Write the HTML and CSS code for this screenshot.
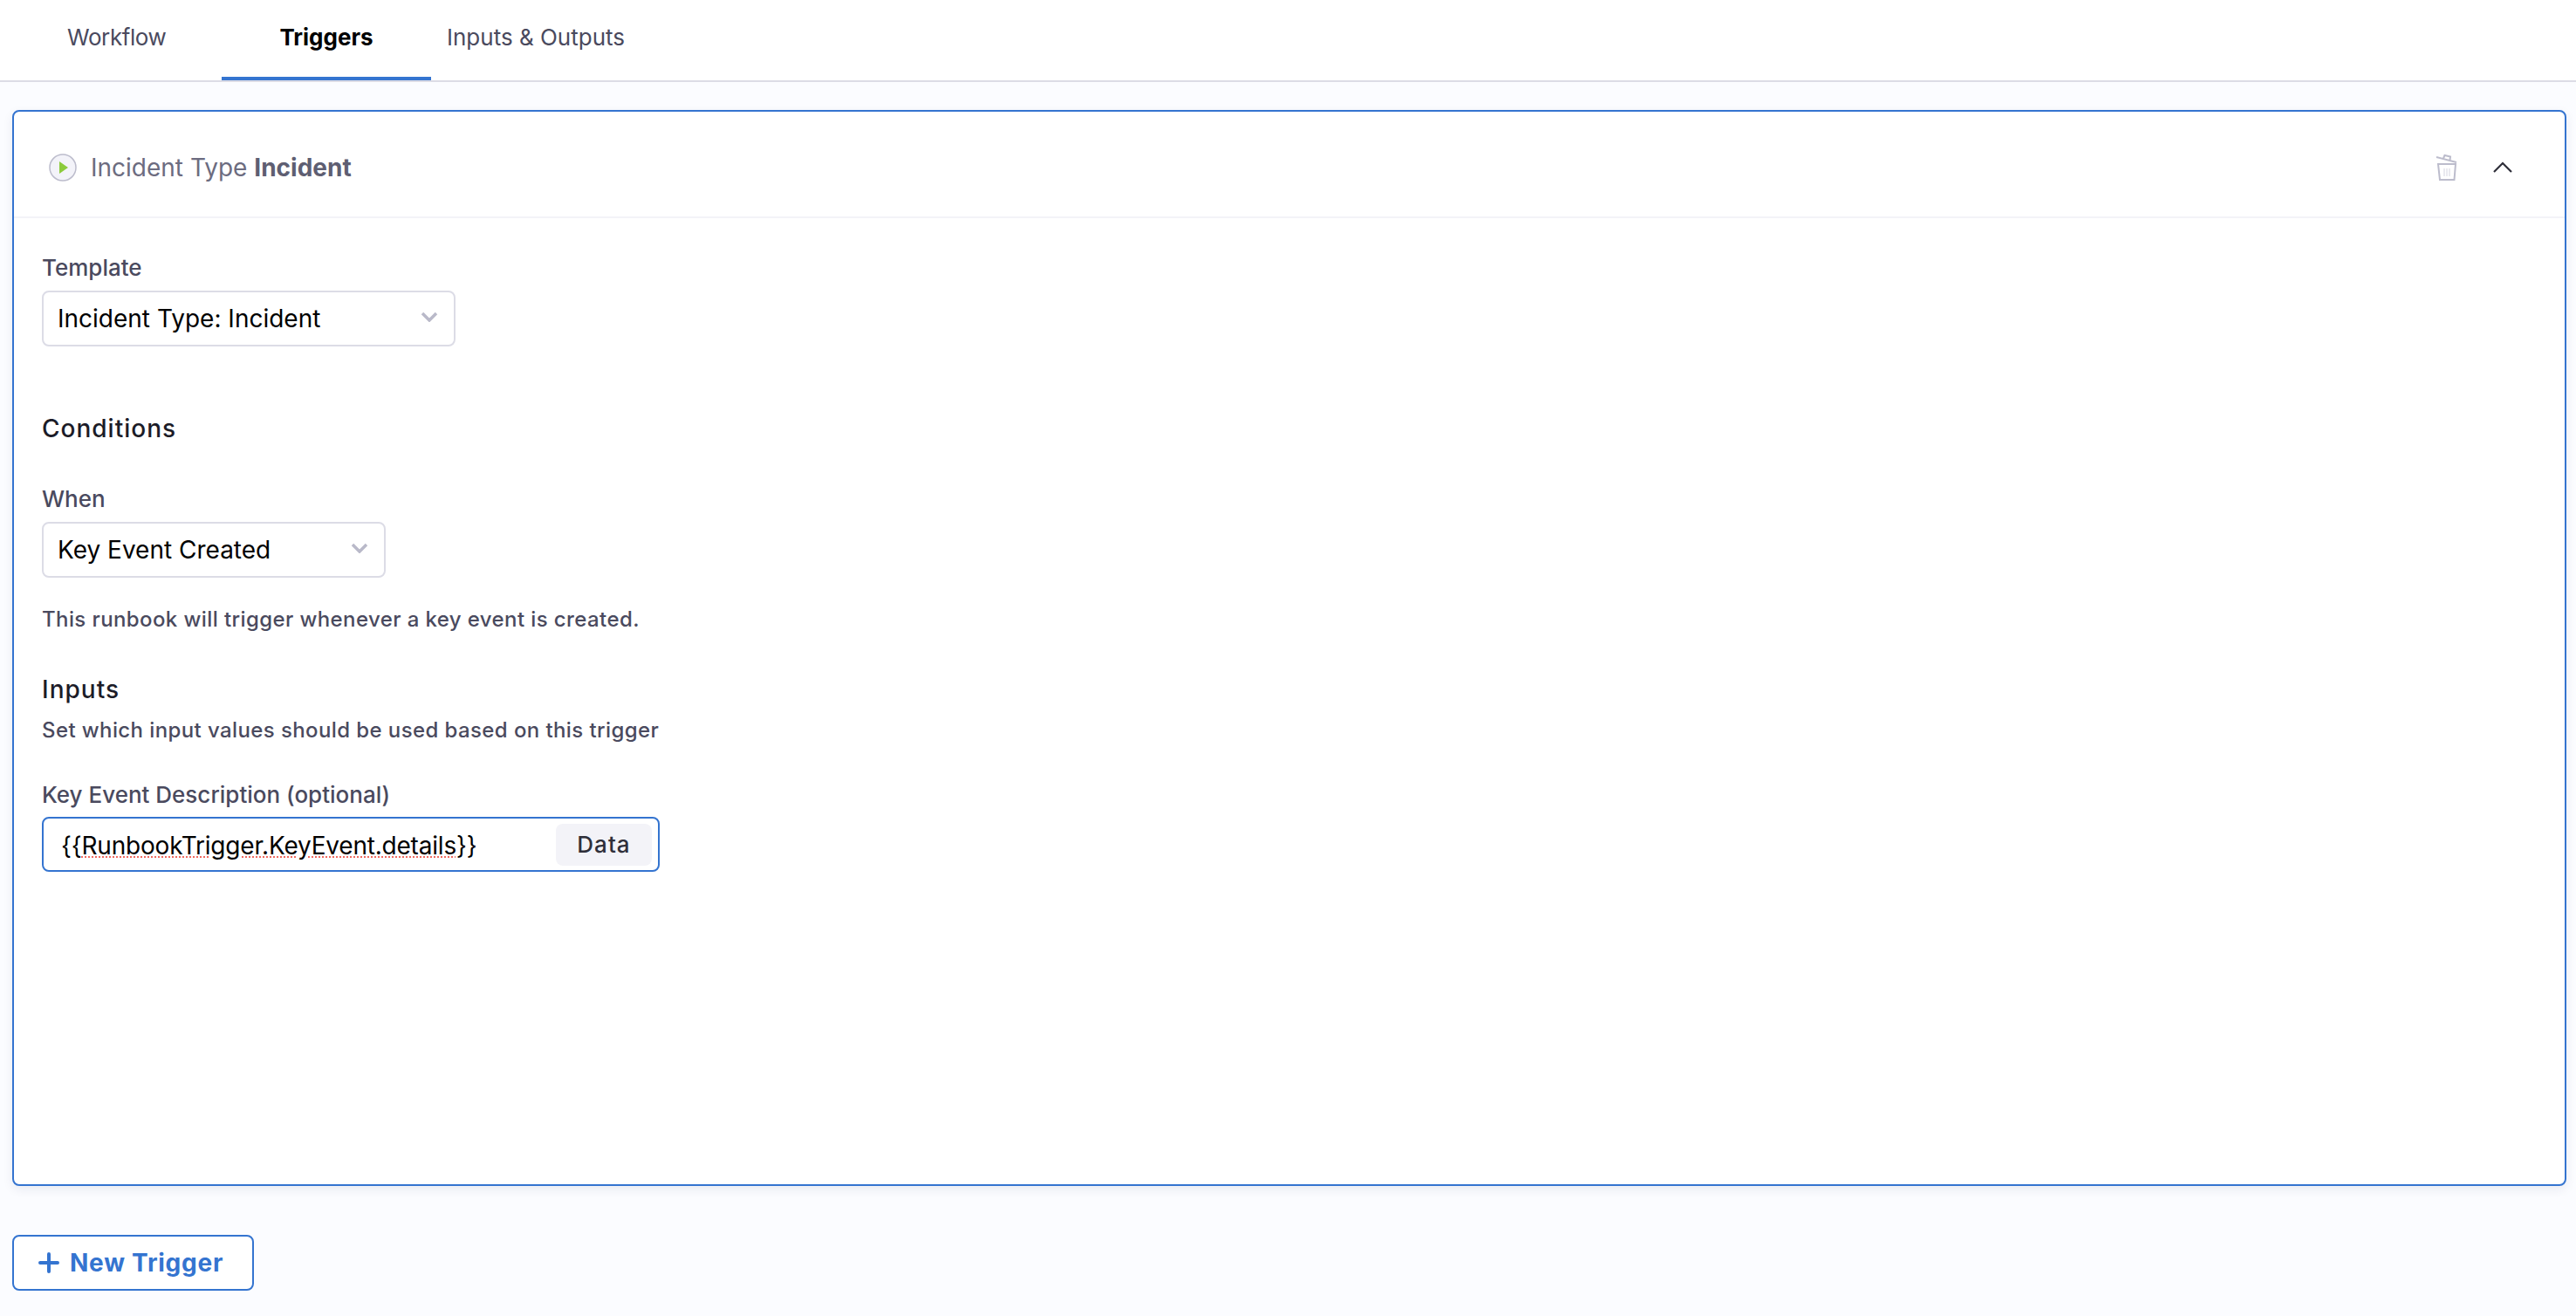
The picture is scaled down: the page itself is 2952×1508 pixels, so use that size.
FILE: index.html
```html
<!DOCTYPE html>
<html lang="en">
<head>
  <meta charset="utf-8">
  <link rel="stylesheet" href="styles.css">
  <title>Triggers</title>
</head>
<body>
  <nav class="tabs">
    <a class="tab tab-workflow">Workflow</a>
    <a class="tab tab-triggers active">Triggers</a>
    <a class="tab tab-io">Inputs &amp; Outputs</a>
  </nav>

  <main class="content">
    <section class="card">
      <header class="card-head">
        <span class="play">
          <svg viewBox="0 0 32 32" width="32" height="32">
            <circle cx="16" cy="16" r="15" fill="#f3f3f9" stroke="#bcbccc" stroke-width="1.5"/>
            <path d="M12 9 L22 16 L12 23 Z" fill="#8ccb3c"/>
          </svg>
        </span>
        <span class="card-title">Incident Type <b>Incident</b></span>
        <span class="card-actions">
          <svg class="trash" viewBox="0 0 26 32" width="26" height="32" fill="none" stroke="#bcbccc" stroke-width="2">
            <path d="M1 4 L24 10"/>
            <path d="M9 5.5 L10.5 2 L17 3.5 L16.5 7.5"/>
            <path d="M3 12 H23 L21.5 30 H5 Z"/>
            <path d="M10 17 V26 M13 17 V26 M16 17 V26" stroke-width="1" stroke="#d4d4e0"/>
          </svg>
          <svg class="chevron-up" viewBox="0 0 22 14" width="22" height="14" fill="none" stroke="#2f2f3a" stroke-width="2.2">
            <path d="M1 12 L11 2 L21 12"/>
          </svg>
        </span>
      </header>

      <div class="card-body">
        <label class="field-label">Template</label>
        <div class="select select-template">
          <span>Incident Type: Incident</span>
          <svg class="chevron" viewBox="0 0 20 12" width="20" height="12" fill="none" stroke="#b9b9c9" stroke-width="3.5"><path d="M2 2 L10 10 L18 2"/></svg>
        </div>

        <h3 class="section-title conditions">Conditions</h3>

        <label class="field-label">When</label>
        <div class="select select-when">
          <span>Key Event Created</span>
          <svg class="chevron" viewBox="0 0 20 12" width="20" height="12" fill="none" stroke="#b9b9c9" stroke-width="3.5"><path d="M2 2 L10 10 L18 2"/></svg>
        </div>
        <p class="help help-when">This runbook will trigger whenever a key event is created.</p>

        <h3 class="section-title inputs">Inputs</h3>
        <p class="help help-inputs">Set which input values should be used based on this trigger</p>

        <label class="field-label label-desc">Key Event Description (optional)</label>
        <div class="data-input">
          <span class="data-value">{{<span class="misspelt">RunbookTrigger.KeyEvent.details</span>}}</span>
          <span class="data-btn">Data</span>
        </div>
      </div>
    </section>

    <button class="new-trigger">
      <svg viewBox="0 0 24 24" width="24" height="24" stroke="#3474d0" stroke-width="4" stroke-linecap="round"><path d="M12 2 V22 M2 12 H22"/></svg>
      New Trigger
    </button>
  </main>
</body>
</html>
```

FILE: styles.css
```css
* {
  box-sizing: border-box;
}

html, body {
  margin: 0;
  height: 100%;
}

body {
  font-family: Inter, "Noto Sans", sans-serif;
  font-size: 28px;
  background: #fbfcff;
  color: #000;
  overflow: hidden;
}

.tabs {
  display: flex;
  height: 94px;
  background: #fff;
  border-bottom: 2px solid #dcdce6;
}

.tab {
  height: 92px;
  line-height: 86px;
  color: #4a4a5e;
  font-size: 26px;
  text-align: center;
}
.tab-workflow { width: 254px; padding-left: 77px; text-align: left; letter-spacing: -0.4px; }
.tab-triggers { width: 240px; }
.tab-io { margin-left: 18px; }
.tab.active {
  color: #000;
  font-weight: 700;
  border-bottom: 4px solid #3474d0;
  border-radius: 4px 4px 0 0;
}

.content {
  padding: 32px 11px 0 14px;
}

.card {
  height: 1233px;
  background: #fff;
  border: 2px solid #3474d0;
  border-radius: 8px;
  box-shadow: 0 4px 12px rgba(30, 40, 90, 0.08);
}

.card-head {
  display: flex;
  align-items: center;
  height: 122px;
  padding: 8px 60px 0 40px;
  border-bottom: 2px solid #f3f3f8;
}

.play {
  display: flex;
  margin-right: 16px;
}

.card-title {
  color: #6c6c80;
  font-weight: 400;
}
.card-title b {
  color: #5e5e72;
  font-weight: 700;
}

.card-actions {
  display: flex;
  align-items: center;
  gap: 40px;
  margin-left: auto;
}

.card-body {
  padding: 40px 32px;
}

.field-label {
  display: block;
  height: 34px;
  line-height: 34px;
  font-size: 26px;
  color: #4a4a5e;
  font-weight: 500;
}

.select {
  display: flex;
  align-items: center;
  justify-content: space-between;
  height: 64px;
  margin-top: 9px;
  padding: 0 18px 0 16px;
  background: #fff;
  border: 2px solid #dcdce6;
  border-radius: 8px;
}
.select-template { width: 474px; }
.select-when { width: 394px; }
.chevron { margin-bottom: 4px; }

.section-title {
  margin: 0;
  height: 36px;
  line-height: 36px;
  font-size: 28px;
  font-weight: 500;
  letter-spacing: 1px;
  color: #1c1c28;
}
.conditions { margin: 76px 0 46px; }
.inputs { margin-top: 46px; }

.help {
  margin: 0;
  height: 32px;
  line-height: 32px;
  font-size: 24px;
  letter-spacing: 0.4px;
  font-weight: 500;
  color: #4a4a5e;
}
.help-when { margin-top: 32px; }
.help-inputs { margin-top: 13px; }

.label-desc { margin-top: 41px; }

.data-input {
  display: flex;
  align-items: center;
  justify-content: space-between;
  width: 708px;
  height: 63px;
  margin-top: 8px;
  padding: 0 7px 0 20px;
  border: 2px solid #3474d0;
  border-radius: 8px;
}

.data-value {
  padding-top: 2px;
  letter-spacing: -0.2px;
}

.misspelt {
  text-decoration: underline dotted #f0695f 2px;
  text-underline-offset: 3px;
}

.data-btn {
  width: 110px;
  height: 48px;
  line-height: 48px;
  text-align: center;
  font-size: 26px;
  font-weight: 500;
  letter-spacing: 1px;
  color: #2f2f3a;
  background: #f3f3f8;
  border-radius: 8px;
}

.new-trigger {
  display: flex;
  align-items: center;
  gap: 12px;
  width: 277px;
  height: 64px;
  margin-top: 56px;
  padding: 0 0 0 28px;
  font-family: inherit;
  font-size: 28px;
  font-weight: 700;
  letter-spacing: 0.75px;
  color: #3474d0;
  background: #fff;
  border: 2px solid #3474d0;
  border-radius: 8px;
}
```
